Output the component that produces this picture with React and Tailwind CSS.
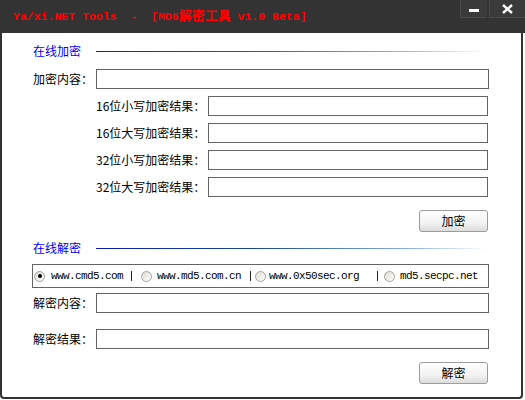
import React from "react";

const cjk = { fontFamily: '"Noto Sans CJK SC", "Liberation Sans", sans-serif' };

function Input({ className = "" }) {
  return <div className={"h-[20px] border border-[#646464] bg-white " + className} />;
}

function Radio({ checked }) {
  return (
    <div className="w-[11px] h-[11px] rounded-full border border-[#a5a29a] bg-[linear-gradient(135deg,#dcdad2,#ffffff)] flex items-center justify-center shrink-0">
      {checked && <div className="w-[4px] h-[4px] rounded-full bg-black" />}
    </div>
  );
}

function Sep({ className = "" }) {
  return <div className={"w-[1px] h-[10px] bg-[#222] shrink-0 " + className} />;
}

function Button({ children }) {
  return (
    <div
      className="w-[69px] h-[22px] rounded-[3px] border border-[#9c9c9c] bg-[linear-gradient(#ffffff,#f2f2f2_60%,#dcdcdc)] flex items-center justify-center text-[12px] text-black"
      style={cjk}
    >
      {children}
    </div>
  );
}

function Header({ children, line }) {
  return (
    <div className="flex items-center h-[14px]">
      <div className="w-[63px] text-[12px] leading-[14px] text-[#0000ff]" style={cjk}>
        {children}
      </div>
      <div className={"w-[391px] h-[1px] " + line} />
    </div>
  );
}

export default function App() {
  const mono = { fontFamily: '"Liberation Mono", "DejaVu Sans Mono", monospace' };
  return (
    <div className="w-[525px] h-[400px] bg-white overflow-hidden">
      <div className="h-[33px] bg-[#333333] flex items-start">
        <div
          className="pl-[13px] pt-[9px] text-[11.5px] leading-[15px] font-bold text-[#ff0000] whitespace-pre"
          style={{ fontFamily: '"Liberation Mono", "Noto Sans CJK SC", monospace' }}
        >
          Ya/xi.NET Tools  -  [MD5<span className="text-[13px]">解密工具</span> v1.0 Beta]
        </div>
        <div className="ml-auto flex gap-[2px]">
          <div className="w-[27px] h-[18px] bg-[#3a3a3a] border-l border-b border-[#4a4a4a] flex items-center justify-center">
            <div className="w-[10px] h-[3px] bg-white mt-[4px]" />
          </div>
          <div className="w-[36px] h-[18px] bg-[#3a3a3a] border-l border-b border-[#4a4a4a] flex items-center justify-center">
            <svg width="11" height="10" viewBox="0 0 11 10">
              <path d="M1 1 L10 9 M10 1 L1 9" stroke="white" strokeWidth="2.4" />
            </svg>
          </div>
        </div>
      </div>

      <div className="w-[523px] h-[366px] border-l-2 border-r-2 border-b-2 border-[#333333] rounded-b-[4px] pl-[31px]">
        <div className="w-[456px] flex flex-col text-[12px] text-black" style={cjk}>
          <div className="mt-[11px]">
            <Header line="bg-[linear-gradient(to_right,#0020e0,#0a5ccc_40%,#8cbcee_80%,#ffffff)]">在线加密</Header>
          </div>

          <div className="mt-[11px] flex items-center">
            <div className="w-[63px] leading-[14px]">加密内容：</div>
            <Input className="w-[393px]" />
          </div>

          {["16位小写加密结果：", "16位大写加密结果：", "32位小写加密结果：", "32位大写加密结果："].map((t) => (
            <div key={t} className="mt-[7px] flex items-center pl-[63px]">
              <div className="w-[112px] leading-[14px]">{t}</div>
              <Input className="w-[280px]" />
            </div>
          ))}

          <div className="mt-[13px] flex justify-end pr-[1px]">
            <Button>加密</Button>
          </div>

          <div className="mt-[9px]">
            <Header line="bg-[linear-gradient(to_right,#0a1aa8,#14489a_40%,#88b0dc_80%,#ffffff)]">在线解密</Header>
          </div>

          <div
            className="mt-[9px] -ml-[1px] w-[457px] h-[24px] border border-[#646464] flex items-center text-[11px] tracking-[-0.6px] text-black"
            style={mono}
          >
            <div className="ml-[1px]"><Radio checked /></div>
            <div className="ml-[6px] w-[72px]">www.cmd5.com</div>
            <Sep className="ml-[8px]" />
            <div className="ml-[9px]"><Radio /></div>
            <div className="ml-[5px] w-[85px]">www.md5.com.cn</div>
            <Sep className="ml-[8px]" />
            <div className="ml-[4px]"><Radio /></div>
            <div className="ml-[3px] w-[95px]">www.0x50sec.org</div>
            <Sep className="ml-[13px]" />
            <div className="ml-[6px]"><Radio /></div>
            <div className="ml-[5px]">md5.secpc.net</div>
          </div>

          <div className="mt-[5px] flex items-center">
            <div className="w-[63px] leading-[14px]">解密内容：</div>
            <Input className="w-[393px]" />
          </div>

          <div className="mt-[16px] flex items-center">
            <div className="w-[63px] leading-[14px]">解密结果：</div>
            <Input className="w-[393px]" />
          </div>

          <div className="mt-[13px] flex justify-end pr-[1px]">
            <Button>解密</Button>
          </div>
        </div>
      </div>
    </div>
  );
}
